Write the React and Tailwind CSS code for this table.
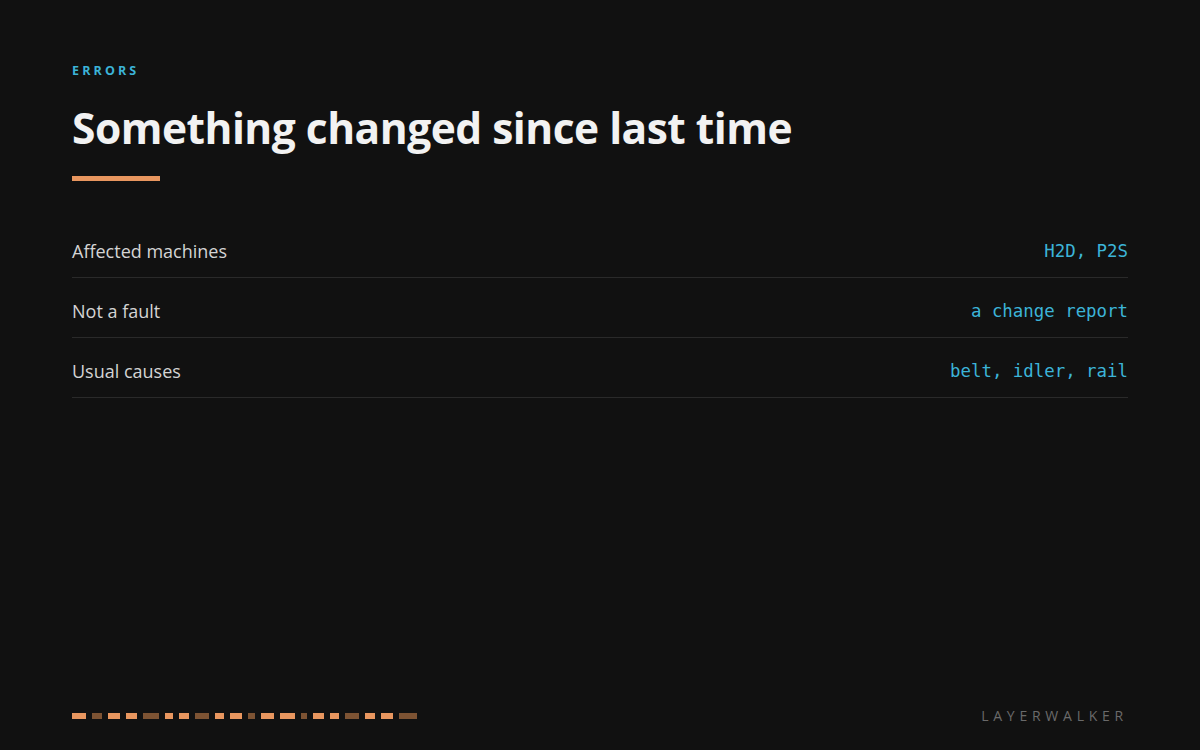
import React from "react";

const rows = [
  { label: "Affected machines", value: "H2D, P2S" },
  { label: "Not a fault", value: "a change report" },
  { label: "Usual causes", value: "belt, idler, rail" },
];

// widths of the dashed footer strip, true = bright segment
const dashes = [
  [14, true], [10, false], [12, true], [11, true], [16, false], [8, true],
  [10, true], [14, false], [9, true], [12, true], [7, false], [13, true],
  [15, true], [6, false], [11, true], [9, true], [14, false], [10, true],
  [12, true], [18, false],
];

const App = () => {
  return (
    <div
      className="w-full h-[750px] bg-[#111111] px-[72px] flex flex-col"
      style={{ fontFamily: '"Open Sans", "Noto Sans", sans-serif' }}
    >
      <div className="pt-[63px]">
        <p className="text-[12.5px] font-bold tracking-[0.25em] text-[#3cb4d8] leading-4">
          ERRORS
        </p>
        <h1 className="mt-[21px] text-[42.5px] font-bold text-[#f2f2f2] leading-[56px] tracking-[-0.012em]">
          Something changed since last time
        </h1>
        <div className="mt-[20px] w-[88px] h-[5px] bg-[#e8965f]" />

        <div className="mt-[37px]">
          {rows.map((r, i) => (
            <div
              key={i}
              className="flex items-center justify-between h-[60px] pt-[8px] border-b border-[#2a2a2a]"
            >
              <span className="text-[18px] text-[#d4d4d4]">{r.label}</span>
              <span
                className="text-[17.4px] text-[#3cb4d8]"
                style={{ fontFamily: '"DejaVu Sans Mono", "Liberation Mono", monospace' }}
              >
                {r.value}
              </span>
            </div>
          ))}
        </div>
      </div>

      <div className="mt-auto pb-[24px] flex items-center justify-between">
        <div className="flex items-center gap-[6px]">
          {dashes.map(([w, bright], i) => (
            <div
              key={i}
              className={bright ? "h-[6px] bg-[#e8965f]" : "h-[6px] bg-[#7d5333]"}
              style={{ width: w }}
            />
          ))}
        </div>
        <span className="text-[14px] tracking-[0.34em] text-[#6a6a6a] leading-5">
          LAYERWALKER
        </span>
      </div>
    </div>
  );
};

export default App;
